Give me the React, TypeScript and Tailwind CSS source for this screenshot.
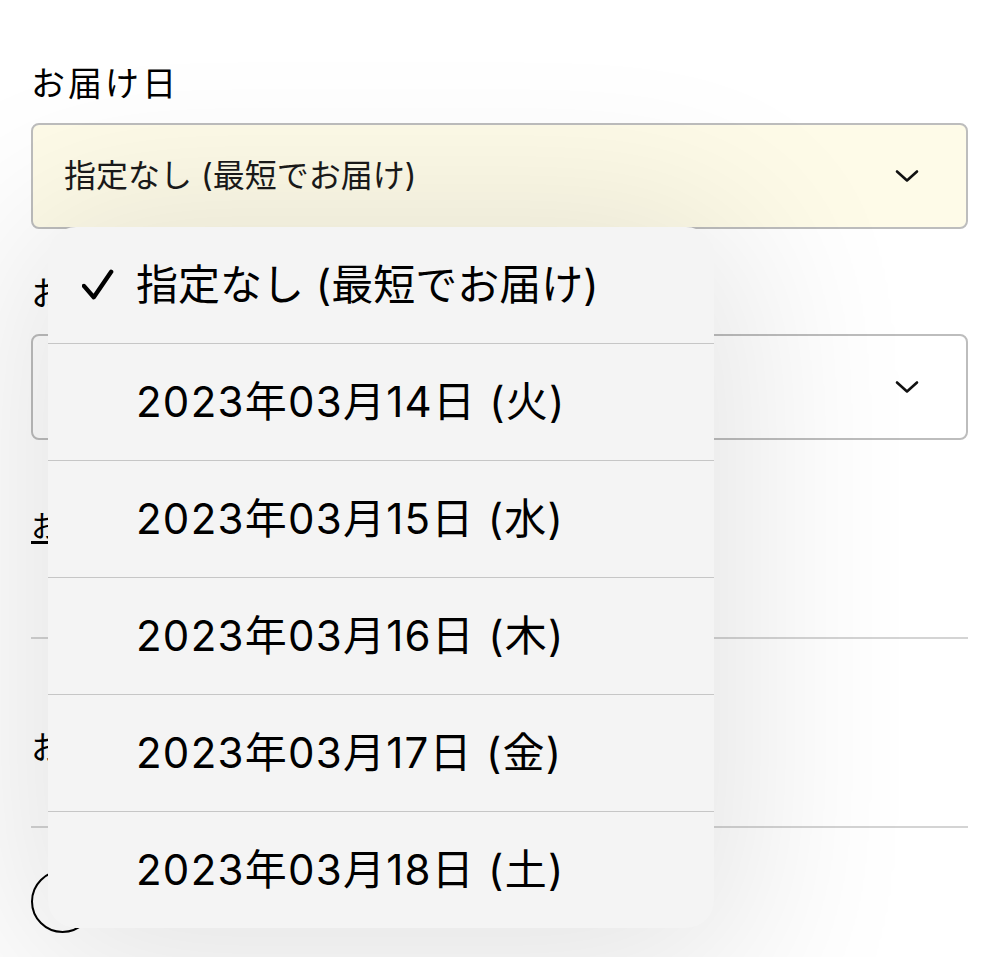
import { useState } from 'react';

const dates = [
  '2023年03月14日 (火)',
  '2023年03月15日 (水)',
  '2023年03月16日 (木)',
  '2023年03月17日 (金)',
  '2023年03月18日 (土)',
];

const Chevron = () => (
  <svg width="24" height="14" viewBox="0 0 24 14" fill="none" className="shrink-0">
    <path d="M2 2.5 L12 11.5 L22 2.5" stroke="#111" strokeWidth="2.6" strokeLinecap="round" strokeLinejoin="round" />
  </svg>
);

const Check = () => (
  <svg width="32" height="32" viewBox="0 0 34 34" fill="none" className="shrink-0">
    <path d="M2 18 L12.5 30 L31 3" stroke="#000" strokeWidth="4.6" strokeLinecap="round" strokeLinejoin="round" />
  </svg>
);

const SelectBox = ({ value, active = false }: { value?: string; active?: boolean }) => (
  <div
    className={`flex h-[106px] items-center justify-between rounded-lg border-2 border-[#bdbdbd] pl-[31px] pr-[47px] ${
      active ? 'bg-[#fefbe8]' : 'bg-white'
    }`}
  >
    <span className="text-[32px] leading-none text-[#1a1a1a]">{value}</span>
    <Chevron />
  </div>
);

const App = () => {
  const [selected] = useState(-1);

  return (
    <div className="relative min-h-[957px] overflow-hidden bg-white font-['Inter','Noto_Sans_CJK_JP',sans-serif] text-black">
      <div className="px-[31px] pt-[60px]">
        <div className="text-[34px] leading-[48px] tracking-[0.09em]">お届け日</div>
        <div className="mt-[15px]">
          <SelectBox value="指定なし (最短でお届け)" active />
        </div>

        <div className="mt-[41px] text-[34px] leading-[48px] tracking-[0.09em]">お届け時間帯</div>
        <div className="mt-[16px]">
          <SelectBox value="指定なし" />
        </div>

        <div className="mt-[64px] text-[30px] leading-[44px] underline underline-offset-4">
          お届け日時について
        </div>

        <div className="mt-[89px] border-t-2 border-[#d4d4d4]" />

        <div className="mt-[87px] text-[32px] leading-[44px]">お支払い方法</div>

        <div className="mt-[56px] border-t-2 border-[#d4d4d4]" />

        <div className="mt-[42px] flex items-center gap-5">
          <div className="h-[63px] w-[63px] rounded-full border-2 border-black" />
          <span className="text-[32px]">クレジットカード</span>
        </div>
      </div>

      <div className="absolute left-[48px] top-[227px] z-10 w-[666px] overflow-hidden rounded-[28px] bg-[#f4f4f4] shadow-[0_20px_180px_30px_rgba(0,0,0,0.11)]">
        <div className="flex h-[116px] items-center">
          <div className="flex w-[88px] justify-end pr-[22px]">
            {selected === -1 && <Check />}
          </div>
          <span className="text-[42px] leading-none">指定なし (最短でお届け)</span>
        </div>
        {dates.map((d) => (
          <div key={d} className="flex h-[117px] items-center border-t border-[#c6c6c6] pl-[88px]">
            <span className="text-[42px] leading-none tracking-[0.03em]">{d}</span>
          </div>
        ))}
      </div>
    </div>
  );
};

export default App;
